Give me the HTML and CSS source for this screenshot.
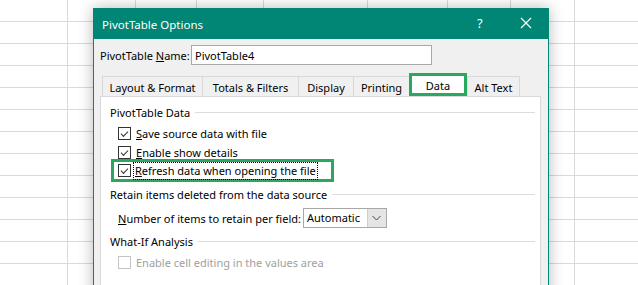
FILE: index.html
```html
<!DOCTYPE html>
<html lang="en">
<head>
    <meta charset="UTF-8">
    <meta name="viewport" content="width=device-width, initial-scale=1.0">
    <title>PivotTable Options</title>
    <link rel="stylesheet" href="styles.css">
</head>
<body>
    <div class="dialog">
        <div class="titlebar">
            <span class="title">PivotTable Options</span>
            <span class="help">?</span>
            <svg class="close" width="12" height="12" viewBox="0 0 12 12">
                <path d="M1 1 L11 11 M11 1 L1 11" stroke="#fff" stroke-width="1.2" fill="none"/>
            </svg>
        </div>

        <div class="body">
            <div class="name-row">
                <label for="pt-name">PivotTable <u>N</u>ame:</label>
                <input type="text" id="pt-name" value="PivotTable4">
            </div>

            <div class="tabs">
                <div class="tab t-layout">Layout &amp; Format</div>
                <div class="tab t-totals">Totals &amp; Filters</div>
                <div class="tab t-display">Display</div>
                <div class="tab t-printing">Printing</div>
                <div class="tab t-data active">Data</div>
                <div class="tab t-alt">Alt Text</div>
            </div>

            <div class="panel">
                <div class="group-title first"><span>PivotTable Data</span></div>

                <div class="check-row">
                    <span class="box checked"></span>
                    <span class="text"><u>S</u>ave source data with file</span>
                </div>
                <div class="check-row">
                    <span class="box checked"></span>
                    <span class="text"><u>E</u>nable show details</span>
                </div>
                <div class="check-row highlight">
                    <span class="box checked"></span>
                    <span class="text focus"><u>R</u>efresh data when opening the file</span>
                </div>

                <div class="group-title after-highlight"><span>Retain items deleted from the data source</span></div>

                <div class="retain-row">
                    <span class="text"><u>N</u>umber of items to retain per field:</span>
                    <div class="combo">
                        <span class="combo-value">Automatic</span>
                        <span class="combo-btn">
                            <svg width="9" height="6" viewBox="0 0 9 6">
                                <path d="M0.5 1 L4.5 5 L8.5 1" stroke="#444" stroke-width="1" fill="none"/>
                            </svg>
                        </span>
                    </div>
                </div>

                <div class="group-title"><span>What-If Analysis</span></div>

                <div class="check-row disabled">
                    <span class="box"></span>
                    <span class="text">Enable cell editing in the values area</span>
                </div>
            </div>
        </div>
    </div>
</body>
</html>
```

FILE: styles.css
```css
html, body {
    margin: 0;
    height: 100%;
    overflow: hidden;
}

body {
    font-family: "Noto Sans", "Open Sans", sans-serif;
    font-size: 11px;
    color: #000;
    background-color: #fff;
    /* spreadsheet grid behind the dialog */
    background-image:
        linear-gradient(#dadada, #dadada),
        linear-gradient(#dadada, #dadada),
        linear-gradient(#dadada, #dadada),
        linear-gradient(#dadada, #dadada),
        linear-gradient(#dadada, #dadada),
        linear-gradient(#dadada, #dadada),
        linear-gradient(#dadada, #dadada),
        linear-gradient(#dadada, #dadada),
        repeating-linear-gradient(to bottom, transparent 0, transparent 21px, #dadada 21px, #dadada 22px);
    background-size: 1px 100%, 1px 100%, 1px 100%, 1px 100%, 1px 100%, 1px 100%, 1px 100%, 1px 100%, 100% 100%;
    background-position: 67px 0, 135px 0, 196px 0, 263px 0, 367px 0, 447px 0, 510px 0, 574px 0, 0 0;
    background-repeat: no-repeat;
}

.dialog {
    width: 454px;
    height: 300px;
    margin: 8px 0 0 93px;
    border: 1px solid #018574;
    border-top: none;
    background-color: #f0f0f0;
    box-shadow: 0 0 14px rgba(0, 0, 0, 0.28);
}

.titlebar {
    height: 31px;
    margin: 0 -1px;
    background-color: #018574;
    color: #fff;
    display: flex;
    align-items: center;
    padding-left: 9px;
}

.title {
    flex: 1;
    font-size: 11.5px;
    padding-top: 1px;
}

.help {
    font-size: 13px;
    width: 14px;
    margin-right: 29px;
    padding-bottom: 1px;
}

.close {
    margin-right: 17px;
    margin-bottom: 1px;
}

.body {
    padding: 6px 0 0 6px;
}

.name-row {
    display: flex;
    align-items: center;
    height: 20px;
}

.name-row label {
    width: 91px;
}

.name-row input {
    box-sizing: border-box;
    width: 241px;
    height: 20px;
    border: 1px solid #a8a8a8;
    padding: 0 3px;
    font-family: inherit;
    font-size: 11px;
    background: #fff;
    outline: none;
}

.tabs {
    display: flex;
    margin: 11px 0 0 2px;
    height: 20px;
}

.tab {
    box-sizing: border-box;
    height: 20px;
    border: 1px solid #d9d9d9;
    border-bottom: none;
    border-right: none;
    background-color: #f0f0f0;
    display: flex;
    align-items: center;
    justify-content: center;
    padding-top: 1px;
}

.t-layout { width: 100px; }
.t-totals { width: 96px; }
.t-display { width: 55px; }
.t-printing { width: 56px; }
.t-alt { width: 53px; border-right: 1px solid #d9d9d9; }

.tab.active {
    width: 58px;
    height: 23px;
    margin-top: -3px;
    background-color: #fff;
    border: 3px solid #2aa862;
    position: relative;
    z-index: 1;
}

.panel {
    box-sizing: border-box;
    width: 441px;
    height: 200px;
    background-color: #fff;
    border: 1px solid #d9d9d9;
    padding: 0 5px 0 9px;
}

.group-title {
    display: flex;
    align-items: center;
    height: 16px;
    margin-top: 5px;
}

.group-title.first {
    margin-top: 7px;
}

.group-title.after-highlight {
    margin-top: 7px;
}

.group-title::after {
    content: "";
    flex: 1;
    height: 1px;
    background-color: #dcdcdc;
    margin-left: 5px;
}

.check-row {
    display: flex;
    align-items: center;
    height: 19px;
    padding-left: 8px;
}

.group-title + .check-row {
    margin-top: 4px;
}

.check-row .text {
    margin-left: 4px;
    padding: 0 1px;
    line-height: 16px;
}

.box {
    box-sizing: border-box;
    flex: none;
    width: 13px;
    height: 13px;
    border: 1px solid #333;
    background: #fff;
    position: relative;
}

.box.checked::after {
    content: "";
    position: absolute;
    left: 2px;
    top: 0px;
    width: 6px;
    height: 3px;
    border-left: 1px solid #333;
    border-bottom: 1px solid #333;
    transform: translate(0, 3px) rotate(-45deg);
    transform-origin: center;
}

.check-row.highlight {
    box-sizing: border-box;
    width: 223px;
    height: 23px;
    margin-left: 1px;
    padding-left: 4px;
    border: 3px solid #2aa862;
    margin-top: -3px;
    margin-bottom: -3px;
}

.text.focus {
    outline: 1px dotted #000;
    outline-offset: 0;
    margin-left: 3px;
}

.disabled .box {
    border-color: #c4c4c4;
}

.disabled .text {
    color: #a0a0a0;
}

.retain-row {
    display: flex;
    align-items: center;
    height: 20px;
    margin-top: 6px;
    padding-left: 8px;
}

.combo {
    box-sizing: border-box;
    display: flex;
    width: 84px;
    height: 20px;
    margin-left: 2px;
    border: 1px solid #a8a8a8;
    background: #fff;
}

.combo-value {
    flex: 1;
    padding-left: 3px;
    line-height: 18px;
}

.combo-btn {
    width: 18px;
    background-color: #e5e5e5;
    border-left: 1px solid #cfcfcf;
    display: flex;
    align-items: center;
    justify-content: center;
}
```
